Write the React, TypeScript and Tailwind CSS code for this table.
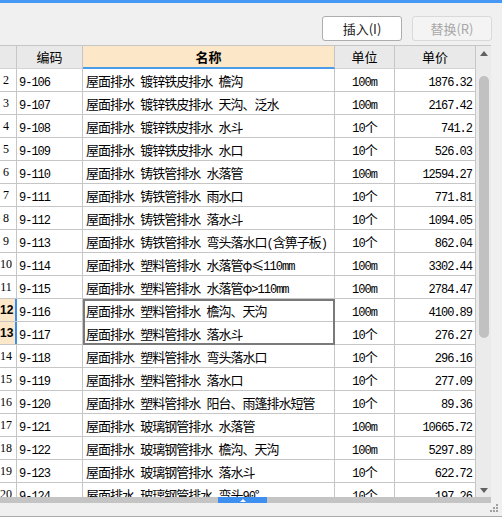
import React from "react";

type Row = [string, string, string, string, string];

const rows: Row[] = [
  ["2", "9-106", "屋面排水 镀锌铁皮排水 檐沟", "100m", "1876.32"],
  ["3", "9-107", "屋面排水 镀锌铁皮排水 天沟、泛水", "100m", "2167.42"],
  ["4", "9-108", "屋面排水 镀锌铁皮排水 水斗", "10个", "741.2"],
  ["5", "9-109", "屋面排水 镀锌铁皮排水 水口", "10个", "526.03"],
  ["6", "9-110", "屋面排水 铸铁管排水 水落管", "100m", "12594.27"],
  ["7", "9-111", "屋面排水 铸铁管排水 雨水口", "10个", "771.81"],
  ["8", "9-112", "屋面排水 铸铁管排水 落水斗", "10个", "1094.05"],
  ["9", "9-113", "屋面排水 铸铁管排水 弯头落水口(含箅子板)", "10个", "862.04"],
  ["10", "9-114", "屋面排水 塑料管排水 水落管φ≤110mm", "100m", "3302.44"],
  ["11", "9-115", "屋面排水 塑料管排水 水落管φ>110mm", "100m", "2784.47"],
  ["12", "9-116", "屋面排水 塑料管排水 檐沟、天沟", "100m", "4100.89"],
  ["13", "9-117", "屋面排水 塑料管排水 落水斗", "10个", "276.27"],
  ["14", "9-118", "屋面排水 塑料管排水 弯头落水口", "10个", "296.16"],
  ["15", "9-119", "屋面排水 塑料管排水 落水口", "10个", "277.09"],
  ["16", "9-120", "屋面排水 塑料管排水 阳台、雨篷排水短管", "10个", "89.36"],
  ["17", "9-121", "屋面排水 玻璃钢管排水 水落管", "100m", "10665.72"],
  ["18", "9-122", "屋面排水 玻璃钢管排水 檐沟、天沟", "100m", "5297.89"],
  ["19", "9-123", "屋面排水 玻璃钢管排水 落水斗", "10个", "622.72"],
  ["20", "9-124", "屋面排水 玻璃钢管排水 弯头90°", "10个", "197.26"],
];

function Mixed({ text }: { text: string }) {
  const parts = text.match(/[\x00-\x7F]+|[^\x00-\x7F]+/g) || [];
  return (
    <>
      {parts.map((p, i) =>
        /^[\x00-\x7F]+$/.test(p) ? (
          <span key={i} className="font-['Liberation_Mono',monospace] text-[12px] tracking-[-1px] whitespace-pre">
            {p}
          </span>
        ) : (
          <span key={i} className="font-['Noto_Sans_CJK_SC',sans-serif] text-[13px] tracking-[-1px]">
            {p}
          </span>
        )
      )}
    </>
  );
}

export default function App() {
  return (
    <div className="w-[502px] h-[527px] overflow-hidden bg-white flex flex-col text-black">
      <div className="h-[3px] bg-[#4599f4]" />
      <div className="h-[42px] bg-[#f0f0f0] flex justify-end items-start pt-[13px] pr-[10px] gap-[10px]">
        <button className="w-[80px] h-[25px] bg-white border border-[#adadad] rounded-[3px] text-[13px] text-[#1a1a1a] font-['Noto_Sans_CJK_SC',sans-serif] leading-none">
          插入(I)
        </button>
        <button className="w-[80px] h-[25px] bg-[#f4f4f4] border border-[#d9d9d9] rounded-[3px] text-[13px] text-[#a8a8a8] font-['Noto_Sans_CJK_SC',sans-serif] leading-none">
          替换(R)
        </button>
      </div>
      <div className="h-[452px] flex bg-[#f0f0f0]">
        <div className="w-[476px] flex flex-col bg-white border-t border-[#c6c6c6]">
          <div className="h-[23px] flex bg-[#e9e9e9] border-b border-[#d4d4d4] font-['Noto_Sans_CJK_SC',sans-serif] text-[13px] leading-[22px]">
            <div className="w-[17px] border-r border-[#c6c6c6]" />
            <div className="w-[66px] border-r border-[#c6c6c6] text-center">编码</div>
            <div className="w-[252px] border-r border-[#c6c6c6] text-center font-bold bg-[#fde7c9] border-b-2 border-b-[#4a9be8] -mb-px">名称</div>
            <div className="w-[60px] border-r border-[#c6c6c6] text-center">单位</div>
            <div className="w-[81px] border-r border-[#c6c6c6] text-center">单价</div>
          </div>
          <div className="h-[428px] overflow-hidden relative">
            {rows.map((r) => {
              const sel = r[0] === "12" || r[0] === "13";
              return (
                <div key={r[0]} className="h-[23px] flex border-b border-[#c6c6c6] leading-[22px] shrink-0">
                  <div
                    className={
                      sel
                        ? "w-[17px] border-r-2 border-[#3b8eea] bg-[#fde7c9] pr-[4px] text-center font-bold font-['Liberation_Sans',sans-serif] text-[12px]"
                        : "w-[17px] border-r border-[#c6c6c6] pr-[4px] text-center font-['Liberation_Serif',serif] text-[12px]"
                    }
                  >
                    {r[0]}
                  </div>
                  <div className="w-[66px] border-r border-[#c6c6c6] pl-[2px] whitespace-nowrap overflow-hidden">
                    <Mixed text={r[1]} />
                  </div>
                  <div className="w-[252px] border-r border-[#c6c6c6] pl-[3px] whitespace-nowrap overflow-hidden">
                    <Mixed text={r[2]} />
                  </div>
                  <div className="w-[60px] border-r border-[#c6c6c6] text-center whitespace-nowrap">
                    <Mixed text={r[3]} />
                  </div>
                  <div className="w-[81px] border-r border-[#c6c6c6] text-right pr-[3px] whitespace-nowrap">
                    <Mixed text={r[4]} />
                  </div>
                </div>
              );
            })}
            <div className="absolute left-[83px] top-[230px] w-[252px] h-[46px] border-2 border-[#7a7a7a]" />
          </div>
        </div>
        <div className="w-[15px] bg-[#ebebeb] border-t border-[#c6c6c6] flex flex-col items-center pt-[5px] pb-[4px]">
          <svg width="8" height="5" viewBox="0 0 8 5" className="ml-[1px]">
            <path d="M0 5 L4 0 L8 5 Z" fill="#606060" />
          </svg>
          <div className="mt-[20px] w-[10px] h-[262px] rounded-full bg-[#c1c1c1]" />
          <div className="flex-1" />
          <svg width="8" height="5" viewBox="0 0 8 5">
            <path d="M0 0 L8 0 L4 5 Z" fill="#606060" />
          </svg>
        </div>
        <div className="flex-1" />
      </div>
      <div className="h-[6px] flex bg-[#f0f0f0]">
        <div className="w-[491px] bg-[#c4c4c4] flex">
          <div className="ml-[218px] w-[49px] bg-[#3d8ff0] flex items-center justify-center">
            <svg width="6" height="3" viewBox="0 0 6 3">
              <path d="M0 3 L3 0 L6 3 Z" fill="#ffffff" />
            </svg>
          </div>
        </div>
      </div>
      <div className="h-[13px] bg-[#f0f0f0] flex justify-end items-start pt-[1px] pr-[4px]">
        <svg width="8" height="8" viewBox="0 0 8 8">
          <rect x="6" y="0" width="2" height="2" fill="#a0a0a0" />
          <rect x="3" y="3" width="2" height="2" fill="#a0a0a0" />
          <rect x="6" y="3" width="2" height="2" fill="#a0a0a0" />
          <rect x="0" y="6" width="2" height="2" fill="#a0a0a0" />
          <rect x="3" y="6" width="2" height="2" fill="#a0a0a0" />
          <rect x="6" y="6" width="2" height="2" fill="#a0a0a0" />
        </svg>
      </div>
      <div className="h-px bg-[#ababab]" />
      <div className="flex-1 bg-white" />
    </div>
  );
}
